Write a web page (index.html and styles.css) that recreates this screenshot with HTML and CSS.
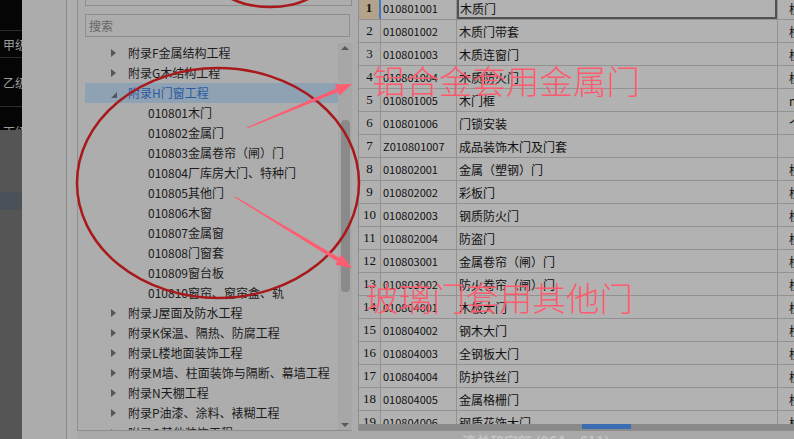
FILE: index.html
```html
<!DOCTYPE html>
<html lang="zh-CN">
<head>
    <meta charset="UTF-8">
    <title>清单和定额</title>
    <link rel="stylesheet" href="styles.css">
</head>
<body>
<div class="screen">

    <div class="left-strip">
        <div class="dark-menu">
            <div class="menu-item h30"></div>
            <div class="menu-item h27">甲级资质</div>
            <div class="menu-item h49">乙级资质</div>
            <div class="menu-item h49">丙级资质</div>
        </div>
        <div class="strip-band"></div>
    </div>

    <div class="side-panel">
        <div class="side-col"></div>
    </div>

    <div class="main">
        <div class="work">
            <!-- 左侧：章节树 -->
            <div class="tree-panel">
                <div class="top-box"></div>
                <div class="search-box">搜索</div>
                <div class="tree-body">
                    <ul class="tree-list">
                        <li class="node"><i class="tri"></i>附录F金属结构工程</li>
                        <li class="node"><i class="tri"></i>附录G木结构工程</li>
                        <li class="node open"><i class="tri"></i>附录H门窗工程</li>
                        <li class="leaf">010801木门</li>
                        <li class="leaf">010802金属门</li>
                        <li class="leaf">010803金属卷帘（闸）门</li>
                        <li class="leaf">010804厂库房大门、特种门</li>
                        <li class="leaf">010805其他门</li>
                        <li class="leaf">010806木窗</li>
                        <li class="leaf">010807金属窗</li>
                        <li class="leaf">010808门窗套</li>
                        <li class="leaf">010809窗台板</li>
                        <li class="leaf">010810窗帘、窗帘盒、轨</li>
                        <li class="node"><i class="tri"></i>附录J屋面及防水工程</li>
                        <li class="node"><i class="tri"></i>附录K保温、隔热、防腐工程</li>
                        <li class="node"><i class="tri"></i>附录L楼地面装饰工程</li>
                        <li class="node"><i class="tri"></i>附录M墙、柱面装饰与隔断、幕墙工程</li>
                        <li class="node"><i class="tri"></i>附录N天棚工程</li>
                        <li class="node"><i class="tri"></i>附录P油漆、涂料、裱糊工程</li>
                        <li class="node"><i class="tri"></i>附录Q其他装饰工程</li>
                    </ul>
                    <div class="v-scroll">
                        <div class="arrow-up"></div>
                        <div class="v-thumb"></div>
                        <div class="arrow-down"></div>
                    </div>
                </div>
            </div>

            <!-- 右侧：清单表格 -->
            <div class="grid-panel">
                <div class="grid-rows">
                    <div class="g-row current">
                        <div class="c-num">1</div><div class="c-code">010801001</div><div class="c-name selected">木质门</div><div class="c-unit">樘</div>
                    </div>
                    <div class="g-row"><div class="c-num">2</div><div class="c-code">010801002</div><div class="c-name">木质门带套</div><div class="c-unit">樘</div></div>
                    <div class="g-row"><div class="c-num">3</div><div class="c-code">010801003</div><div class="c-name">木质连窗门</div><div class="c-unit">樘</div></div>
                    <div class="g-row"><div class="c-num">4</div><div class="c-code">010801004</div><div class="c-name">木质防火门</div><div class="c-unit">樘</div></div>
                    <div class="g-row"><div class="c-num">5</div><div class="c-code">010801005</div><div class="c-name">木门框</div><div class="c-unit">m</div></div>
                    <div class="g-row"><div class="c-num">6</div><div class="c-code">010801006</div><div class="c-name">门锁安装</div><div class="c-unit">个</div></div>
                    <div class="g-row"><div class="c-num">7</div><div class="c-code">Z010801007</div><div class="c-name">成品装饰木门及门套</div><div class="c-unit"></div></div>
                    <div class="g-row"><div class="c-num">8</div><div class="c-code">010802001</div><div class="c-name">金属（塑钢）门</div><div class="c-unit">樘</div></div>
                    <div class="g-row"><div class="c-num">9</div><div class="c-code">010802002</div><div class="c-name">彩板门</div><div class="c-unit">樘</div></div>
                    <div class="g-row"><div class="c-num">10</div><div class="c-code">010802003</div><div class="c-name">钢质防火门</div><div class="c-unit">樘</div></div>
                    <div class="g-row"><div class="c-num">11</div><div class="c-code">010802004</div><div class="c-name">防盗门</div><div class="c-unit">樘</div></div>
                    <div class="g-row"><div class="c-num">12</div><div class="c-code">010803001</div><div class="c-name">金属卷帘（闸）门</div><div class="c-unit">樘</div></div>
                    <div class="g-row"><div class="c-num">13</div><div class="c-code">010803002</div><div class="c-name">防火卷帘（闸）门</div><div class="c-unit">樘</div></div>
                    <div class="g-row"><div class="c-num">14</div><div class="c-code">010804001</div><div class="c-name">木板大门</div><div class="c-unit">樘</div></div>
                    <div class="g-row"><div class="c-num">15</div><div class="c-code">010804002</div><div class="c-name">钢木大门</div><div class="c-unit">樘</div></div>
                    <div class="g-row"><div class="c-num">16</div><div class="c-code">010804003</div><div class="c-name">全钢板大门</div><div class="c-unit">樘</div></div>
                    <div class="g-row"><div class="c-num">17</div><div class="c-code">010804004</div><div class="c-name">防护铁丝门</div><div class="c-unit">樘</div></div>
                    <div class="g-row"><div class="c-num">18</div><div class="c-code">010804005</div><div class="c-name">金属格栅门</div><div class="c-unit">樘</div></div>
                    <div class="g-row"><div class="c-num">19</div><div class="c-code">010804006</div><div class="c-name">钢质花饰大门</div><div class="c-unit">樘</div></div>
                </div>
                <div class="h-scroll"><div class="h-thumb"></div></div>
            </div>
        </div>
        <div class="status-bar">清单和定额 (964 x 611)</div>
    </div>

    <!-- 红色标注层 -->
    <div class="marks">
        <svg width="794" height="439" viewBox="0 0 794 439">
            <ellipse cx="270" cy="-31" rx="62" ry="38" fill="none" stroke="#a8191b" stroke-width="2.5"/>
            <ellipse cx="218" cy="183" rx="141" ry="115" fill="none" stroke="#a8191b" stroke-width="2.5"/>
            <polygon points="247.2,128.5 246.8,127.5 336.5,88.4 338,92" fill="#fd5d70"/>
            <polygon points="352,84 339.6,95.7 334.9,84.6" fill="#fd5d70"/>
            <polygon points="234.7,197.4 235.3,196.6 339.4,258 337.3,261.4" fill="#fd5d70"/>
            <polygon points="352,268 335.2,264.8 341.4,254.6" fill="#fd5d70"/>
        </svg>
        <div class="note note-one">铝合金套用金属门</div>
        <div class="note note-two">玻璃门套用其他门</div>
    </div>
</div>
</body>
</html>
```

FILE: styles.css
```css
html, body {
    margin: 0;
    padding: 0;
}

body {
    font-family: "Noto Sans CJK SC", "Noto Sans", sans-serif;
    font-size: 12px;
    background: #acacac;
}

.screen {
    position: relative;
    width: 794px;
    height: 439px;
    overflow: hidden;
    display: flex;
}

/* ----- 左侧深色菜单 ----- */
.left-strip {
    width: 22px;
    flex-shrink: 0;
    background: #555555;
    overflow: hidden;
}

.dark-menu {
    height: 130px;
    background: #050505;
    overflow: hidden;
}

.menu-item {
    box-sizing: border-box;
    border-bottom: 1px solid #2c2c2c;
    color: #9c9c9c;
    padding-left: 3px;
    white-space: nowrap;
    display: flex;
    align-items: center;
}

.h30 { height: 31px; }
.h27 { height: 27px; }
.h49 { height: 49px; }

.strip-band {
    margin-top: 62px;
    height: 18px;
    background: #4a5159;
}

.side-panel {
    width: 55px;
    flex-shrink: 0;
    background: #aeaeae;
}

.side-col {
    width: 45px;
    height: 100%;
    box-sizing: border-box;
    background: #acacac;
    border-right: 1px solid #898989;
}

/* ----- 主区域 ----- */
.main {
    flex: 1;
    display: flex;
    flex-direction: column;
}

.work {
    height: 431px;
    display: flex;
}

.tree-panel {
    width: 275px;
    box-sizing: border-box;
    border-left: 1px solid #8d8d8d;
    border-bottom: 1px solid #8d8d8d;
    padding-left: 7px;
    background: #adadad;
    display: flex;
    flex-direction: column;
}

.top-box {
    height: 6px;
    box-sizing: border-box;
    border: 1px solid #8e8e8e;
    border-top: none;
}

.search-box {
    margin-top: 8px;
    margin-right: 2px;
    height: 23px;
    box-sizing: border-box;
    border: 1px solid #8e8e8e;
    padding-left: 3px;
    line-height: 21px;
    color: #656565;
}

.tree-body {
    margin-top: 6px;
    flex: 1;
    display: flex;
    min-height: 0;
}

.tree-list {
    flex: 1;
    list-style: none;
    margin: 0;
    padding: 0;
    overflow: hidden;
    color: #1b1b1b;
}

.tree-list li {
    height: 20px;
    line-height: 20px;
    white-space: nowrap;
    display: flex;
    align-items: center;
}

.node {
    padding-left: 26px;
}

.leaf {
    padding-left: 63px;
}

.tri {
    width: 0;
    height: 0;
    margin-right: 12px;
    border-top: 4px solid transparent;
    border-bottom: 4px solid transparent;
    border-left: 5px solid #575757;
}

.node.open {
    background: #8fa2b4;
    color: #2b5aa0;
}

.node.open .tri {
    border-top: 0;
    border-left: 6px solid transparent;
    border-bottom: 6px solid #4f5966;
    margin-top: 3px;
    margin-right: 11px;
}

.v-scroll {
    width: 14px;
    background: #a7a7a7;
    display: flex;
    flex-direction: column;
    align-items: center;
}

.arrow-up,
.arrow-down {
    width: 0;
    height: 0;
    border-left: 4px solid transparent;
    border-right: 4px solid transparent;
}

.arrow-up {
    margin-top: 3px;
    border-bottom: 4px solid #5a5a5a;
}

.v-thumb {
    margin-top: 70px;
    width: 9px;
    height: 172px;
    background: #8a8a8a;
    border-radius: 4px;
}

.arrow-down {
    margin-top: auto;
    margin-bottom: 3px;
    border-top: 4px solid #5a5a5a;
}

/* ----- 清单表格 ----- */
.grid-panel {
    flex: 1;
    margin-left: 6px;
    box-sizing: border-box;
    border-left: 1px solid #8f8f8f;
    border-bottom: 1px solid #8d8d8d;
    display: flex;
    flex-direction: column;
    background: #b2b2b2;
}

.grid-rows {
    height: 424px;
    overflow: hidden;
}

.g-row {
    display: flex;
    height: 23px;
    box-sizing: border-box;
    border-bottom: 1px solid #929292;
    color: #101010;
}

.g-row:first-child {
    margin-top: -3px;
}

.g-row > div {
    box-sizing: border-box;
    border-right: 1px solid #929292;
    display: flex;
    align-items: center;
    white-space: nowrap;
    overflow: hidden;
}

.c-num {
    width: 22px;
    justify-content: center;
    font-family: "Liberation Serif", serif;
    font-size: 13px;
    background: #b0b0b0;
}

.current .c-num {
    background: #b4a38b;
    font-weight: bold;
    border-right: 2px solid #3d79c6;
}

.c-code {
    width: 76px;
    padding-left: 2px;
    font-size: 11px;
}

.c-name {
    width: 321px;
    padding-left: 2px;
}

.c-name.selected {
    box-shadow: inset 0 0 0 2px #505050;
    padding-left: 3px;
}

.c-unit {
    flex: 1;
    padding-left: 11px;
}

.h-scroll {
    height: 6px;
    background: #8a8a8a;
    position: relative;
}

.h-thumb {
    margin-left: 223px;
    width: 49px;
    height: 5px;
    background: #3a6db3;
}

.status-bar {
    flex: 1;
    background: #a9a9a9;
    padding-left: 385px;
    font-size: 14px;
    font-weight: bold;
    line-height: 20px;
    color: #c3c3c3;
    white-space: nowrap;
    overflow: hidden;
}

/* ----- 标注 ----- */
.marks {
    position: absolute;
    left: 0;
    top: 0;
    width: 794px;
    height: 439px;
    pointer-events: none;
}

.marks svg {
    position: absolute;
    left: 0;
    top: 0;
}

.note {
    position: absolute;
    font-size: 33.5px;
    font-weight: 300;
    line-height: 1;
    color: #fd5b6e;
    white-space: nowrap;
}

.note-one {
    left: 372px;
    top: 63px;
}

.note-two {
    left: 365px;
    top: 280px;
}
```
